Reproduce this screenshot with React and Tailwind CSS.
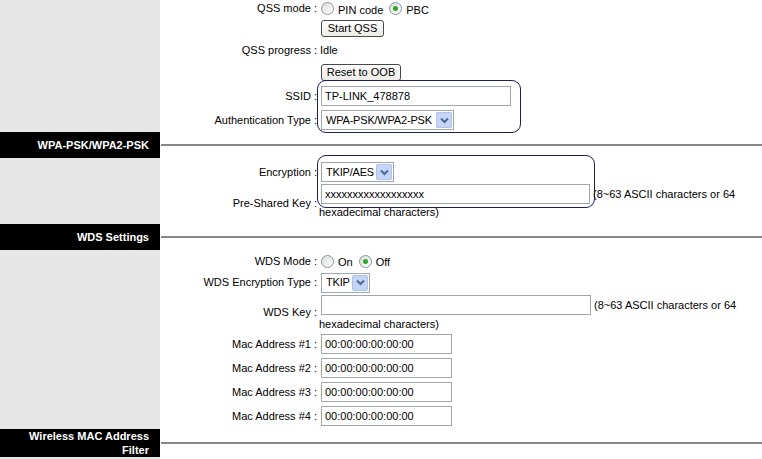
import React from 'react';

const font = { fontFamily: '"Liberation Sans", Arial, sans-serif' };

const Radio = ({ checked }) => (
  <span className="w-[13px] h-[13px] rounded-full border border-[#8595a6] bg-gradient-to-br from-[#dcdcd6] to-white flex items-center justify-center shrink-0">
    {checked && <span className="w-[5px] h-[5px] rounded-full bg-[#29a829]" />}
  </span>
);

const Button = ({ children, className }) => (
  <div className={`h-[17px] border border-[#4a4a4a] rounded-[3px] bg-gradient-to-b from-white to-[#ecebe6] flex items-center justify-center text-[11px] text-black ${className}`}>
    {children}
  </div>
);

const TextBox = ({ value, className }) => (
  <div className={`h-[20px] border border-[#a0a6ad] bg-white flex items-center pl-[3px] text-[11px] text-black ${className}`}>
    {value}
  </div>
);

const Select = ({ value, className }) => (
  <div className={`h-[20px] border border-[#a0a6ad] bg-white flex items-center justify-between pl-[4px] pr-[1px] text-[11px] text-black tracking-[-0.2px] ${className}`}>
    <span>{value}</span>
    <span className="w-[16px] h-[16px] rounded-[2px] bg-[#c5d4f7] border border-[#b0c2ec] flex items-center justify-center shrink-0">
      <svg width="9" height="7" viewBox="0 0 9 7">
        <path d="M1 1.5 L4.5 5 L8 1.5" fill="none" stroke="#4d6a9c" strokeWidth="2" />
      </svg>
    </span>
  </div>
);

const Row = ({ label, className = '', children }) => (
  <div className={`flex ${className}`}>
    <div className="w-[157px] shrink-0 flex items-center justify-end text-[11px] text-black whitespace-nowrap">
      {label ? `${label} :` : ''}
    </div>
    <div className="flex-1 pl-[4px] flex items-center">{children}</div>
  </div>
);

const Header = ({ title, className = '' }) => (
  <div className={`flex ${className}`}>
    <div className="w-[160px] shrink-0 bg-black text-white font-bold text-[11px] leading-[14px] flex items-center justify-end text-right pr-[11px]">
      {title}
    </div>
    <div className="flex-1 flex items-center pl-[1px]">
      <div className="h-[2px] w-full bg-[#888888]" />
    </div>
  </div>
);

const Body = ({ children, className = '' }) => (
  <div className={`flex ${className}`}>
    <div className="w-[160px] shrink-0 bg-[#e6e6e6]" />
    <div className="flex-1 flex flex-col">{children}</div>
  </div>
);

const Hint = () => <span className="ml-[3px] text-[11px] text-black whitespace-nowrap">(8~63 ASCII characters or 64</span>;

export default function App() {
  return (
    <div className="relative w-[762px] h-[459px] bg-white overflow-hidden" style={font}>
      <Body className="h-[132px]">
        <Row label="QSS mode" className="h-[17px]">
          <div className="flex items-center">
            <Radio />
            <span className="ml-[4px] mt-[3px] text-[11px]">PIN code</span>
            <span className="ml-[6px]"><Radio checked /></span>
            <span className="ml-[4px] mt-[3px] text-[11px]">PBC</span>
          </div>
        </Row>
        <Row className="h-[23px]">
          <Button className="w-[63px]">Start QSS</Button>
        </Row>
        <Row label="QSS progress" className="h-[21px]">
          <span className="text-[11px] -ml-[1px]">Idle</span>
        </Row>
        <Row className="h-[23px]">
          <Button className="w-[80px]">Reset to OOB</Button>
        </Row>
        <Row label="SSID" className="h-[24px]">
          <TextBox value="TP-LINK_478878" className="w-[190px]" />
        </Row>
        <Row label="Authentication Type" className="h-[24px]">
          <Select value="WPA-PSK/WPA2-PSK" className="w-[133px]" />
        </Row>
      </Body>

      <Header title="WPA-PSK/WPA2-PSK" className="h-[26px]" />

      <Body className="h-[66px]">
        <Row label="Encryption" className="h-[25px] pt-[3px]">
          <Select value="TKIP/AES" className="w-[73px]" />
        </Row>
        <Row label="Pre-Shared Key" className="h-[41px]">
          <div className="flex flex-col self-start">
            <div className="flex items-center mt-[1px]">
              <TextBox value="xxxxxxxxxxxxxxxxxx" className="w-[269px]" />
              <Hint />
            </div>
            <div className="h-[16px] leading-[16px] text-[11px] -ml-[2px]">hexadecimal characters)</div>
          </div>
        </Row>
      </Body>

      <Header title="WDS Settings" className="h-[26px]" />

      <Body className="h-[179px]">
        <Row label="WDS Mode" className="h-[22px]">
          <div className="flex items-center">
            <Radio />
            <span className="ml-[4px] mt-[3px] text-[11px]">On</span>
            <span className="ml-[6px]"><Radio checked /></span>
            <span className="ml-[4px] mt-[3px] text-[11px]">Off</span>
          </div>
        </Row>
        <Row label="WDS Encryption Type" className="h-[21px]">
          <Select value="TKIP" className="w-[49px]" />
        </Row>
        <Row label="WDS Key" className="h-[39px]">
          <div className="flex flex-col self-start">
            <div className="flex items-center mt-[2px]">
              <TextBox value="" className="w-[270px]" />
              <Hint />
            </div>
            <div className="h-[16px] leading-[16px] text-[11px] -ml-[2px] mt-[1px]">hexadecimal characters)</div>
          </div>
        </Row>
        {[1, 2, 3, 4].map((n) => (
          <Row key={n} label={`Mac Address #${n}`} className="h-[24px]">
            <TextBox value="00:00:00:00:00:00" className="w-[131px]" />
          </Row>
        ))}
      </Body>

      <Header title={<span>Wireless MAC Address<br />Filter</span>} className="h-[28px]" />

      <Body className="h-[2px]" />

      <div className="absolute left-[317px] top-[80px] w-[204px] h-[53px] rounded-[9px] border-[1.5px] border-[#1d1f5c] pointer-events-none" />
      <div className="absolute left-[317px] top-[155px] w-[278px] h-[53px] rounded-[9px] border-[1.5px] border-[#1d1f5c] pointer-events-none" />
    </div>
  );
}
